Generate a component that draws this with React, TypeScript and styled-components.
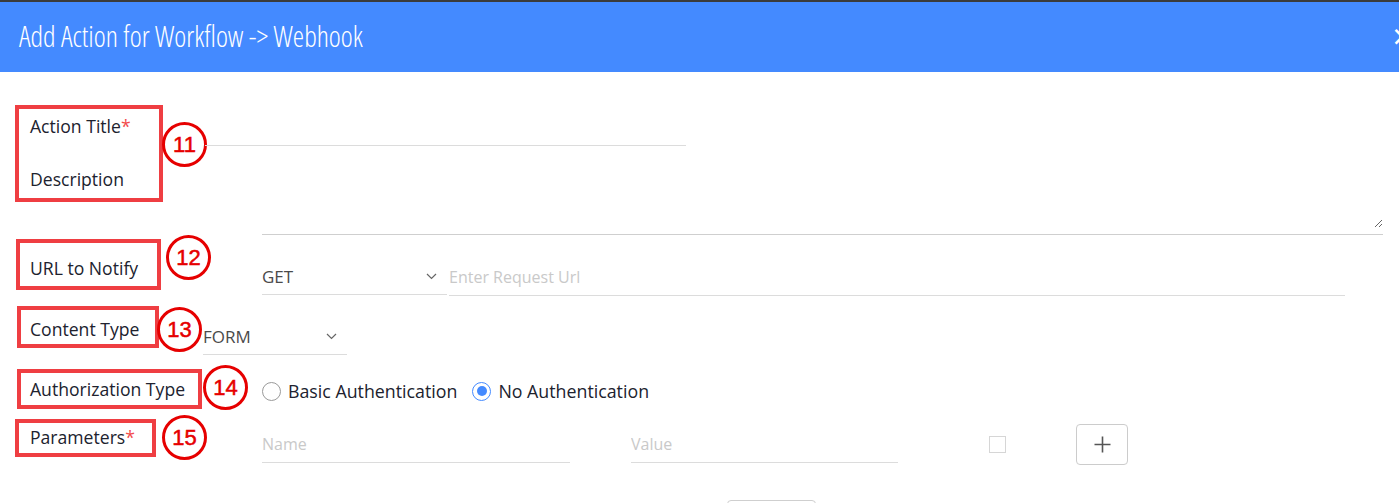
import React from "react";
import styled, { createGlobalStyle } from "styled-components";

const Global = createGlobalStyle`
  html, body { margin: 0; padding: 0; background: #fff; }
  body { font-family: "Open Sans", "Liberation Sans", sans-serif; overflow: hidden; }
  * { box-sizing: border-box; }
`;

const Page = styled.div`
  width: 1399px;
  height: 503px;
  overflow: hidden;
  border-top: 2px solid #3b3b3b;
`;

const Header = styled.header`
  height: 70px;
  background: #448aff;
  display: flex;
  align-items: center;
  justify-content: space-between;
  padding-left: 19px;
  overflow: hidden;
`;

const Title = styled.h1`
  margin: 0;
  font-family: "Open Sans", "Liberation Sans", sans-serif;
  font-weight: 300;
  font-size: 28.6px;
  font-stretch: 75%;
  color: #fff;
  line-height: 1;
  margin-top: -1px;
`;

const Close = styled.span`
  color: #fff;
  font-size: 34px;
  font-weight: 400;
  line-height: 1;
  margin-right: -13px;
  font-family: "Open Sans", sans-serif;
  margin-top: -3px;
`;

const Body = styled.div`
  padding: 33px 0 0 15px;
  display: flex;
  flex-direction: column;
`;

const Row = styled.div<{ $h: number }>`
  display: flex;
  align-items: flex-start;
  height: ${(p) => p.$h}px;
`;

const LabelBox = styled.div<{ $mt: number; $ml: number; $w: number; $h: number; $pt: number }>`
  margin-top: ${(p) => p.$mt}px;
  margin-left: ${(p) => p.$ml}px;
  width: ${(p) => p.$w}px;
  height: ${(p) => p.$h}px;
  border: 4px solid #ef3e42;
  padding: ${(p) => p.$pt}px 0 0 ${(p) => 11 - p.$ml}px;
  display: flex;
  flex-direction: column;
  gap: 29px;
  flex-shrink: 0;
`;

const Label = styled.span`
  font-size: 17.6px;
  line-height: 24px;
  color: #20222e;
  white-space: nowrap;
`;

const Req = styled.span`
  color: #f24b4b;
`;

const Badge = styled.div<{ $mt: number; $ml: number }>`
  margin-top: ${(p) => p.$mt}px;
  margin-left: ${(p) => p.$ml}px;
  width: 45px;
  height: 45px;
  border-radius: 50%;
  border: 3px solid #e60000;
  background: #fff;
  color: #e60000;
  font-family: "Liberation Sans", Arial, sans-serif;
  font-weight: 400;
  font-size: 22px;
  -webkit-text-stroke: 0.5px #e60000;
  display: flex;
  align-items: center;
  justify-content: center;
  flex-shrink: 0;
`;

const FieldCol = styled.div`
  display: flex;
  flex-direction: column;
`;

const LineInput = styled.input<{ $mt: number; $ml: number; $w: number }>`
  margin-top: ${(p) => p.$mt}px;
  margin-left: ${(p) => p.$ml}px;
  width: ${(p) => p.$w}px;
  height: 37px;
  border: none;
  border-bottom: 1px solid #dcdcdc;
  outline: none;
  padding: 0;
  font-family: "Open Sans", sans-serif;
  font-size: 16px;
  color: #444;
  background: transparent;
  flex-shrink: 0;
  &::placeholder { color: #c9c9c9; }
`;

const TitleInput = styled(LineInput)`
  height: 41px;
`;

const TextAreaWrap = styled.div`
  margin-left: 55px;
  width: 1121px;
  margin-top: 4px;
  height: 85px;
  border-bottom: 1px solid #cfcfcf;
  padding-bottom: 6px;
  display: flex;
`;

const TextArea = styled.textarea`
  flex: 1;
  border: none;
  outline: none;
  resize: vertical;
  font-family: "Open Sans", sans-serif;
  font-size: 16px;
  padding: 0;
`;

const Select = styled.div<{ $mt: number; $ml: number; $w: number }>`
  margin-top: ${(p) => p.$mt}px;
  margin-left: ${(p) => p.$ml}px;
  width: ${(p) => p.$w}px;
  height: 37px;
  border-bottom: 1px solid #dcdcdc;
  display: flex;
  align-items: center;
  justify-content: space-between;
  padding-right: 10px;
  font-size: 17px;
  color: #4a4a4a;
  flex-shrink: 0;
`;

const RadioGroup = styled.div`
  margin-top: 17px;
  margin-left: 14px;
  height: 24px;
  display: flex;
  align-items: center;
`;

const RadioItem = styled.label`
  display: flex;
  align-items: center;
  gap: 7px;
  margin-right: 15px;
  font-size: 17.8px;
  color: #20222e;
  white-space: nowrap;
`;

const RadioDot = styled.span<{ $on?: boolean }>`
  width: 19px;
  height: 19px;
  border-radius: 50%;
  border: 1px solid ${(p) => (p.$on ? "#448aff" : "#9a9a9a")};
  display: flex;
  align-items: center;
  justify-content: center;
  &::after {
    content: "";
    width: 10px;
    height: 10px;
    border-radius: 50%;
    background: ${(p) => (p.$on ? "#448aff" : "transparent")};
  }
`;

const Check = styled.span`
  margin-top: 24px;
  margin-left: 91px;
  width: 17px;
  height: 17px;
  border: 1px solid #d6d6d6;
  flex-shrink: 0;
`;

const AddButton = styled.button`
  margin-top: 12px;
  margin-left: 70px;
  width: 52px;
  height: 41px;
  border: 1px solid #cccccc;
  border-radius: 4px;
  background: #fff;
  display: flex;
  align-items: center;
  justify-content: center;
  padding: 0;
  flex-shrink: 0;
`;

const Footer = styled.div`
  display: flex;
  padding-left: 712px;
`;

const FooterButton = styled.button`
  width: 89px;
  height: 40px;
  border: 1px solid #cfcfcf;
  border-radius: 4px;
  background: #fff;
`;

const Chevron = () => (
  <svg width="11" height="7" viewBox="0 0 11 7">
    <polyline points="1,1 5.5,5.5 10,1" fill="none" stroke="#666" strokeWidth="1.2" />
  </svg>
);

const Plus = () => (
  <svg width="17" height="17" viewBox="0 0 17 17">
    <path d="M8.5 0.5V16.5M0.5 8.5H16.5" stroke="#555" strokeWidth="1.6" />
  </svg>
);

export default function App() {
  return (
    <>
      <Global />
      <Page>
        <Header>
          <Title>Add Action for Workflow -&gt; Webhook</Title>
          <Close>×</Close>
        </Header>
        <Body>
          <Row $h={130}>
            <LabelBox $mt={0} $ml={0} $w={148} $h={97} $pt={5}>
              <Label>
                Action Title<Req>*</Req>
              </Label>
              <Label>Description</Label>
            </LabelBox>
            <Badge $mt={17} $ml={-1}>11</Badge>
            <FieldCol>
              <TitleInput $mt={0} $ml={-2} $w={481} />
              <TextAreaWrap>
                <TextArea />
              </TextAreaWrap>
            </FieldCol>
          </Row>
          <Row $h={65}>
            <LabelBox $mt={4} $ml={1} $w={145} $h={51} $pt={13}>
              <Label>URL to Notify</Label>
            </LabelBox>
            <Badge $mt={0} $ml={5}>12</Badge>
            <Select $mt={23} $ml={51} $w={185}>
              <span>GET</span>
              <Chevron />
            </Select>
            <LineInput $mt={24} $ml={2} $w={896} placeholder="Enter Request Url" />
          </Row>
          <Row $h={62}>
            <LabelBox $mt={6} $ml={2} $w={142} $h={42} $pt={7}>
              <Label>Content Type</Label>
            </LabelBox>
            <Badge $mt={7} $ml={-2}>13</Badge>
            <Select $mt={18} $ml={1} $w={144}>
              <span>FORM</span>
              <Chevron />
            </Select>
          </Row>
          <Row $h={50}>
            <LabelBox $mt={7} $ml={2} $w={185} $h={40} $pt={4}>
              <Label>Authorization Type</Label>
            </LabelBox>
            <Badge $mt={3} $ml={1}>14</Badge>
            <RadioGroup>
              <RadioItem>
                <RadioDot />
                Basic Authentication
              </RadioItem>
              <RadioItem>
                <RadioDot $on />
                No Authentication
              </RadioItem>
            </RadioGroup>
          </Row>
          <Row $h={88}>
            <LabelBox $mt={7} $ml={0} $w={141} $h={38} $pt={2}>
              <Label>
                Parameters<Req>*</Req>
              </Label>
            </LabelBox>
            <Badge $mt={3} $ml={6}>15</Badge>
            <LineInput $mt={14} $ml={55} $w={308} placeholder="Name" />
            <LineInput $mt={14} $ml={61} $w={267} placeholder="Value" />
            <Check />
            <AddButton>
              <Plus />
            </AddButton>
          </Row>
          <Footer>
            <FooterButton />
          </Footer>
        </Body>
      </Page>
    </>
  );
}
